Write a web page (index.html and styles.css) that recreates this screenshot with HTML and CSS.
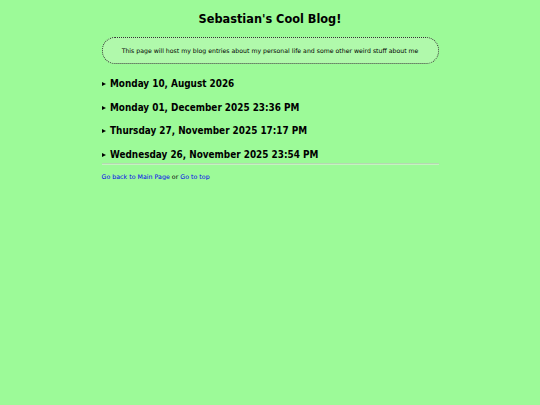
FILE: index.html
```
<!DOCTYPE html>
<html>
<head>
<meta charset="utf-8">
<link rel="stylesheet" href="styles.css">
</head>
<body>
<div class="page">
  <h1 class="title">Sebastian's Cool Blog!</h1>
  <div class="intro">This page will host my blog entries about my personal life and some other weird stuff about me</div>
  <details class="entry"><summary>Monday 10, August 2026</summary></details>
  <details class="entry"><summary>Monday 01, December 2025 23:36 PM</summary></details>
  <details class="entry"><summary>Thursday 27, November 2025 17:17 PM</summary></details>
  <details class="entry"><summary>Wednesday 26, November 2025 23:54 PM</summary></details>
  <hr class="rule">
  <p class="links"><a href="#">Go back to Main Page</a> or <a href="#">Go to top</a></p>
</div>
</body>
</html>
```
FILE: styles.css
```
html, body {
  margin: 0;
  padding: 0;
  background: #9cfa98;
}
body {
  font-family: "Comic Sans MS", "DejaVu Sans", sans-serif;
  color: #000;
}
.page {
  width: 337px;
  margin: 0 auto;
  display: flex;
  flex-direction: column;
}
.title {
  font-family: "Comic Sans MS", "DejaVu Sans Condensed", "DejaVu Sans", sans-serif;
  font-size: 12.6px;
  font-weight: bold;
  text-align: center;
  margin: 10px 0 9px;
  line-height: 18px;
}
.intro {
  height: 27px;
  box-sizing: border-box;
  border: 1px dotted #333;
  border-radius: 13px;
  background: #b0f9ab;
  font-size: 6.2px;
  display: flex;
  align-items: center;
  justify-content: center;
  margin-bottom: 8px;
}
.entry {
  margin: 0;
}
.entry summary {
  font-family: "Comic Sans MS", "DejaVu Sans Condensed", "DejaVu Sans", sans-serif;
  font-size: 9.9px;
  font-weight: bold;
  height: 23.5px;
  line-height: 23.5px;
  list-style: none;
  display: flex;
  align-items: center;
  cursor: pointer;
}
.entry summary::-webkit-details-marker {
  display: none;
}
.entry summary::before {
  content: "";
  width: 0;
  height: 0;
  border-left: 4px solid #000;
  border-top: 2.5px solid transparent;
  border-bottom: 2.5px solid transparent;
  margin: 1px 4px 0 0.5px;
}
.rule {
  margin: -3px 0 0;
  border: 0;
  border-top: 1px solid #b4d8b0;
  border-bottom: 1px solid #c4f2c0;
  height: 0;
}
.links {
  font-size: 6.3px;
  margin: 8px 0 0;
}
.links a {
  color: #0000ee;
}
```
